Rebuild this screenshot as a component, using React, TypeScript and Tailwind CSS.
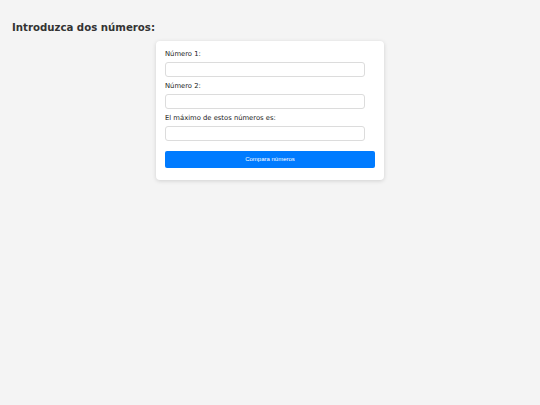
export default function App() {
  const fields = ["Número 1:", "Número 2:", "El máximo de estos números es:"];
  return (
    <main className="min-h-[405px] bg-[#f4f4f4] px-3 pt-[21px] font-['DejaVu_Sans',sans-serif] text-[#333]">
      <h1 className="mb-[7px] text-[10.2px] font-bold leading-[13px]">Introduzca dos números:</h1>
      <section className="mx-auto w-[228px] rounded-[4px] bg-white px-[9px] pb-[12px] pt-[7px] shadow-[0_1px_4px_rgba(0,0,0,0.15)]">
        {fields.map((label) => (
          <div key={label} className="mb-[3px]">
            <label className="mb-[1px] block text-[6.8px] leading-[13px] text-[#222]">{label}</label>
            <input
              type="text"
              className="block h-[15px] w-[200px] rounded-[3px] border border-[#dcdcdc] bg-white"
            />
          </div>
        ))}
        <button className="mt-[3px] h-[17px] w-full rounded-[2px] bg-[#007bff] font-['Liberation_Sans',sans-serif] text-[6px] text-white">
          Compara números
        </button>
      </section>
    </main>
  );
}
